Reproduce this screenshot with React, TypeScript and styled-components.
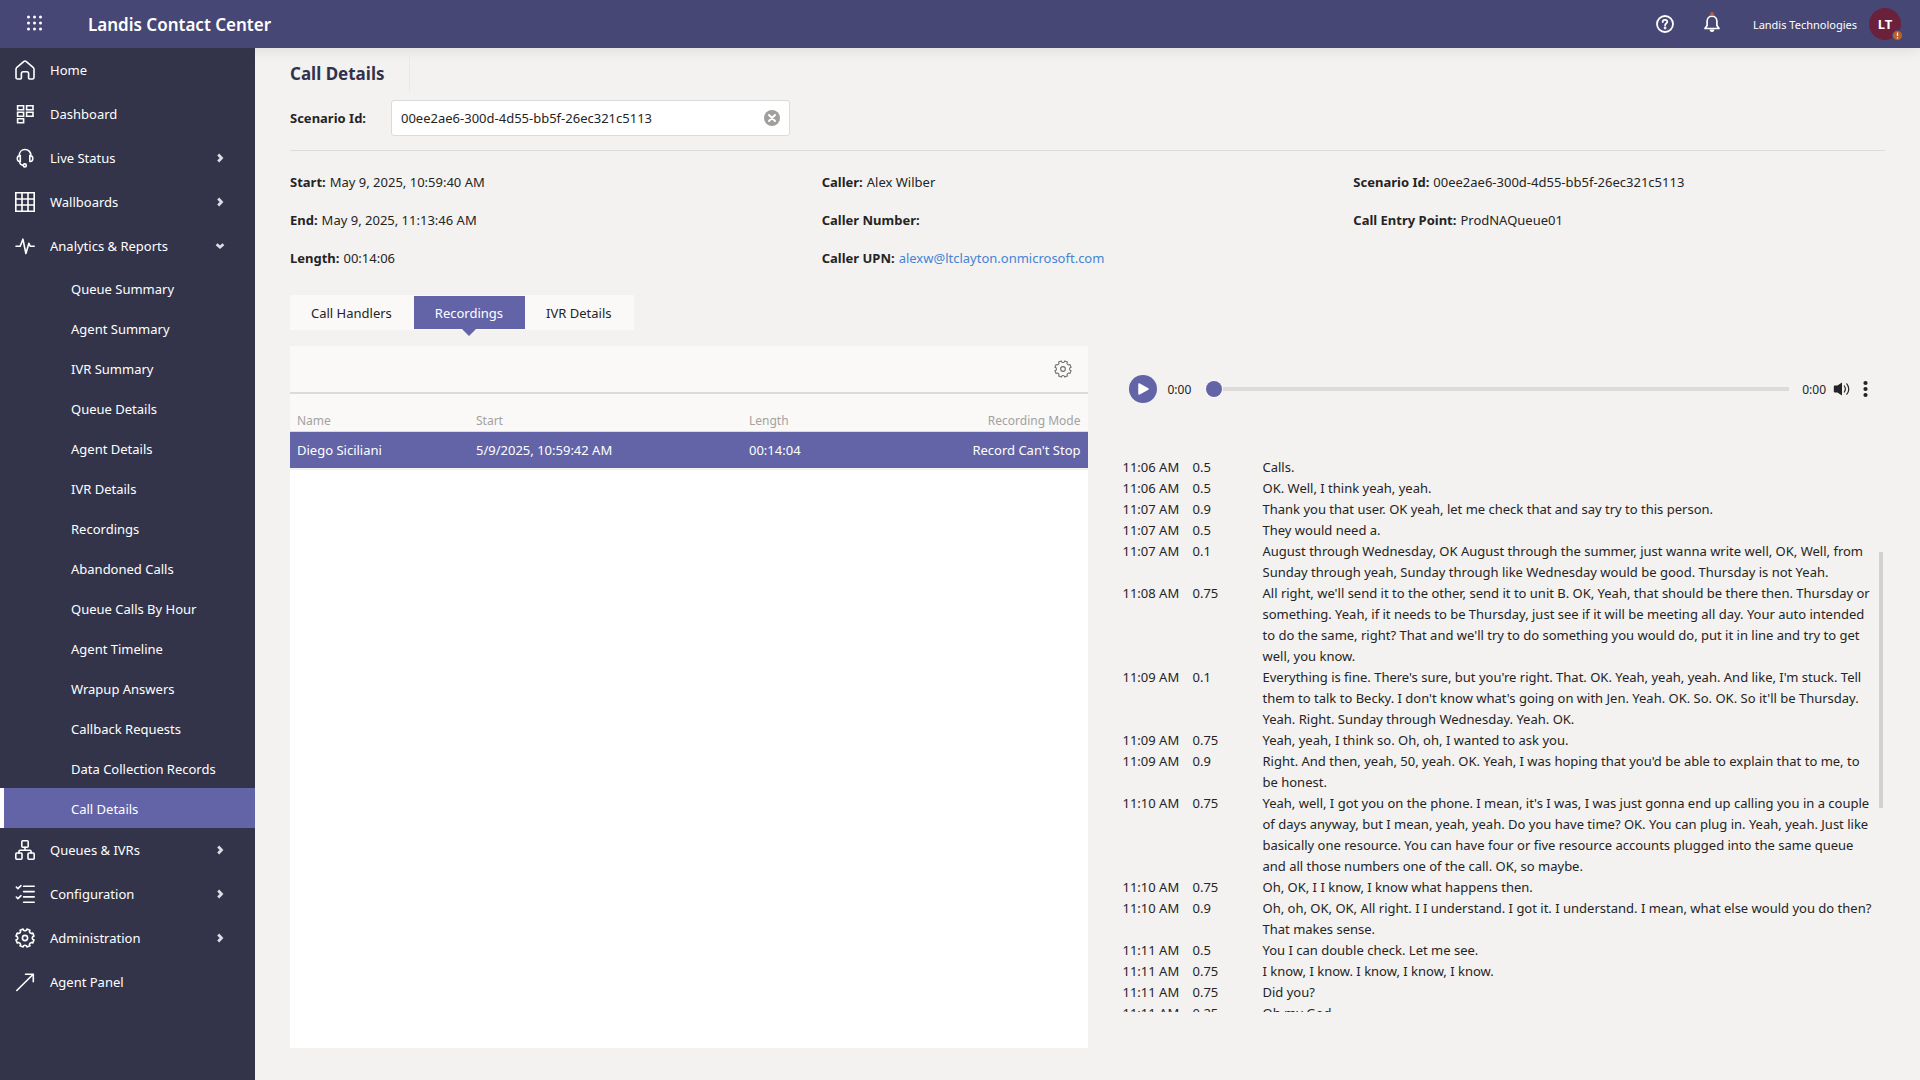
import React from "react";
import styled, { createGlobalStyle, css } from "styled-components";

const color = {
  header: "#464775",
  sidebar: "#33344a",
  brand: "#6264a7",
  page: "#f3f2f1",
  surface: "#faf9f8",
  border: "#dcdbda",
  text: "#252424",
  muted: "#a3a2a0",
  link: "#4583d3",
};

const GlobalStyle = createGlobalStyle`
  *, *::before, *::after { box-sizing: border-box; }
  body {
    margin: 0;
    background: ${color.page};
    color: ${color.text};
    font: 13px/21px "Noto Sans", "Open Sans", sans-serif;
  }
  button, input { font: inherit; color: inherit; }
  button { background: none; border: 0; padding: 0; cursor: pointer; }
  a { color: inherit; text-decoration: none; }
  svg { display: block; flex: none; }
`;

/* ---------- shell ---------- */

const Shell = styled.div`
  display: grid;
  grid-template: 48px minmax(0, 1fr) / 255px minmax(0, 1fr);
  height: 100vh;
`;

const TopBar = styled.header`
  grid-column: 1 / -1;
  display: flex;
  align-items: center;
  padding: 0 19px 0 26px;
  background: ${color.header};
  color: #fff;
  box-shadow: 0 2px 14px rgba(0, 0, 0, 0.09);
`;

const Brand = styled.div`
  margin-left: 44px;
  font-size: 17px;
  font-weight: 600;
`;

const TopActions = styled.div`
  display: flex;
  align-items: center;
  gap: 28px;
  margin-left: auto;
`;

const Account = styled.button`
  display: flex;
  align-items: center;
  gap: 12px;
  margin-left: 4px;
  font-size: 11px;
`;

const Avatar = styled.span`
  position: relative;
  display: grid;
  place-items: center;
  width: 32px;
  height: 32px;
  border-radius: 50%;
  background: #6b213c;
  font-size: 13px;
  font-weight: 700;
`;

const AvatarBadge = styled.svg`
  position: absolute;
  right: -2px;
  bottom: -1px;
`;

/* ---------- sidebar ---------- */

const Sidebar = styled.nav`
  position: relative;
  overflow: hidden;
  background: ${color.sidebar};
  color: #fff;
`;

const NavList = styled.ul`
  list-style: none;
  margin: 0;
  padding: 0;
`;

const NavLink = styled.a`
  display: flex;
  align-items: center;
  gap: 15px;
  height: 44px;
  padding: 0 30px 0 15px;
`;

const NavText = styled.span`
  flex: 1;
`;

const SubLink = styled.a<{ $active?: boolean }>`
  display: flex;
  align-items: center;
  height: 40px;
  padding: 2px 0 0 67px;
  border-left: 4px solid transparent;
  ${(p) =>
    p.$active &&
    css`
      background: ${color.brand};
      border-left-color: #fff;
    `}
`;

/* ---------- main ---------- */

const Main = styled.main`
  display: flex;
  flex-direction: column;
  min-width: 0;
  padding: 8px 35px 32px;
`;

const TitleRow = styled.div`
  display: flex;
`;

const Title = styled.h1`
  margin: 0;
  padding-right: 24px;
  border-right: 1px solid #e9e8e7;
  color: #32334a;
  font-size: 17px;
  line-height: 36px;
  font-weight: 700;
`;

const SearchRow = styled.div`
  display: flex;
  align-items: center;
  margin-top: 8px;
  padding-bottom: 14px;
  border-bottom: 1px solid ${color.border};
`;

const SearchLabel = styled.label`
  width: 101px;
  font-weight: 700;
`;

const SearchBox = styled.div`
  display: flex;
  align-items: center;
  width: 399px;
  height: 36px;
  padding-right: 9px;
  border: 1px solid ${color.border};
  border-radius: 3px;
  background: #fff;
`;

const SearchInput = styled.input`
  flex: 1;
  min-width: 0;
  padding: 0 9px;
  border: 0;
  outline: 0;
  background: none;
`;

const Facts = styled.dl`
  display: grid;
  grid-template-columns: repeat(3, 1fr);
  margin: 12px 0 0;
`;

const Fact = styled.div`
  display: flex;
  align-items: center;
  gap: 4px;
  height: 38px;

  dt {
    font-weight: 700;
  }
  dd {
    margin: 0;
  }
`;

const MailLink = styled.a`
  color: ${color.link};
`;

const Tabs = styled.div`
  display: flex;
  align-self: flex-start;
  margin-top: 18px;
  padding: 1px 0;
  background: ${color.surface};
`;

const Tab = styled.button<{ $active?: boolean }>`
  position: relative;
  height: 33px;
  padding: 1px 22px 0 21px;
  ${(p) =>
    p.$active &&
    css`
      background: ${color.brand};
      color: #fff;
      &::after {
        content: "";
        position: absolute;
        top: 100%;
        left: 50%;
        margin-left: -7px;
        border: 7px solid transparent;
        border-bottom-width: 0;
        border-top-color: ${color.brand};
      }
    `}
`;

const Columns = styled.div`
  flex: 1;
  display: grid;
  grid-template-columns: repeat(2, minmax(0, 1fr));
  min-height: 0;
  margin-top: 16px;
`;

/* ---------- recordings ---------- */

const Panel = styled.section`
  background: #fff;
`;

const PanelTools = styled.div`
  display: flex;
  align-items: center;
  justify-content: flex-end;
  height: 48px;
  padding: 0 16px 0 0;
  border-bottom: 2px solid ${color.border};
  background: ${color.surface};
`;

const RecordingTable = styled.table`
  width: 100%;
  table-layout: fixed;
  border-collapse: separate;
  border-spacing: 0;
  text-align: left;

  th,
  td {
    padding: 0 7px;
  }
  th {
    height: 37px;
    padding-top: 16px;
    border-bottom: 1px solid ${color.border};
    background: ${color.surface};
    color: ${color.muted};
    font-size: 12px;
    font-weight: 400;
  }
  td {
    height: 38px;
    border-bottom: 2px solid ${color.page};
    background: ${color.brand};
    color: #fff;
  }
  th:last-child,
  td:last-child {
    text-align: right;
  }
`;

const Col = styled.col<{ $w?: number }>`
  width: ${(p) => (p.$w ? `${p.$w}px` : "auto")};
`;

/* ---------- player and transcript ---------- */

const Playback = styled.section`
  display: flex;
  flex-direction: column;
  min-height: 0;
  padding: 0 2px 36px 35px;
`;

const Player = styled.div`
  display: flex;
  align-items: center;
  height: 86px;
  padding: 0 15px 0 6px;
  font-size: 12px;
`;

const PlayButton = styled.button`
  display: grid;
  place-items: center;
  width: 28px;
  height: 28px;
  margin-right: 11px;
  border-radius: 50%;
  background: ${color.brand};
`;

const Seek = styled.input`
  appearance: none;
  flex: 1;
  min-width: 0;
  height: 16px;
  margin: 0 13px 0 15px;
  background: linear-gradient(${color.border}, ${color.border}) center / 100% 4px no-repeat;

  &::-webkit-slider-thumb {
    appearance: none;
    width: 16px;
    height: 16px;
    border-radius: 50%;
    background: ${color.brand};
    box-shadow: 0 0 0 1px ${color.surface};
  }
`;

const PlayerIcons = styled.div`
  display: flex;
  align-items: center;
  gap: 12px;
  margin-left: 7px;
`;

const TranscriptFrame = styled.div`
  position: relative;
  flex: 1;
  min-height: 0;
  margin-top: 25px;
  overflow: hidden;
`;

const ScrollThumb = styled.div`
  position: absolute;
  top: 95px;
  right: 0;
  width: 4px;
  height: 256px;
  background: #d2d1d0;
`;

const Transcript = styled.table`
  width: 100%;
  table-layout: fixed;
  border-collapse: collapse;

  td {
    padding: 0;
    vertical-align: top;
  }
  td:last-child {
    padding-right: 8px;
  }
`;

/* ---------- icons ---------- */

const Glyph = ({ children }: { children: React.ReactNode }) => (
  <svg width="20" height="20" viewBox="0 0 20 20" fill="none" stroke="currentColor" strokeWidth="1.6" strokeLinecap="round" strokeLinejoin="round" aria-hidden="true">
    {children}
  </svg>
);

const gearPath =
  "M8.1 1 L8.7 2.3 Q10 3.2 11.3 2.3 L11.9 1 L14.9 2.2 L14.4 3.7 Q14.8 5.2 16.3 5.6 L17.8 5.1 L19 8.1 L17.7 8.7 Q16.8 10 17.7 11.3 L19 11.9 L17.8 14.9 L16.3 14.4 Q14.8 14.8 14.4 16.3 L14.9 17.8 L11.9 19 L11.3 17.7 Q10 16.8 8.7 17.7 L8.1 19 L5.1 17.8 L5.6 16.3 Q5.2 14.8 3.7 14.4 L2.2 14.9 L1 11.9 L2.3 11.3 Q3.2 10 2.3 8.7 L1 8.1 L2.2 5.1 L3.7 5.6 Q5.2 5.2 5.6 3.7 L5.1 2.2 Z";

const icons = {
  home: (
    <Glyph>
      <path d="M2.6 19c-1 0-1.6-.7-1.6-1.6V9.1c0-.6.2-1 .6-1.4L9 1.4c.6-.5 1.4-.5 2 0l7.4 6.3c.4.4.6.8.6 1.4v8.3c0 .9-.6 1.6-1.6 1.6h-2.8c-.6 0-1-.4-1-1v-4.6c0-1-.7-1.7-1.7-1.7H8.1c-1 0-1.7.7-1.7 1.7V18c0 .6-.4 1-1 1z" />
    </Glyph>
  ),
  dashboard: (
    <Glyph>
      <path d="M2.6 1.7h6v4h-6zM11.6 1.7H18v4h-6.4zM2.6 8.200h6v4h-6zM11.6 8.2H18v4h-6.4zM2.6 14.7h6v4h-6z" strokeLinejoin="miter" />
    </Glyph>
  ),
  headset: (
    <Glyph>
      <path d="M4.2 7.5C4.2 4 6.7 1.5 10 1.500s5.9 2.5 5.9 6M5.300 7.600v5.800c-2.300.3-3-1.100-3-2.900s.8-3 3-2.900zM14.800 7.600v5.800c2.300.3 3-1.100 3-2.900s-.8-3-3-2.900zM4.600 13.500c.2 2.400 1.400 3.700 3.800 3.700" />
      <circle cx="9.8" cy="17.4" r="1.5" />
    </Glyph>
  ),
  grid: (
    <Glyph>
      <path d="M.8.8h18.4v18.4H.8zM7 .8v18.4M13 .8v18.4M.8 7h18.4M.8 13h18.4" strokeLinejoin="miter" />
    </Glyph>
  ),
  pulse: (
    <Glyph>
      <path d="M1 10.3h4.2L7.9 3.2l3 14.3 3-10.2 1.3 3h4" />
    </Glyph>
  ),
  queues: (
    <Glyph>
      <rect x="6.8" y=".8" width="6.4" height="6.4" rx="1" />
      <rect x=".8" y="13" width="6.2" height="6.2" rx="1" />
      <rect x="13" y="13" width="6.2" height="6.2" rx="1" />
      <path d="M10 7.200v3M3.900 13v-1.600c0-.8.4-1.200 1.200-1.200h9.800c.8 0 1.200.4 1.200 1.200V13" />
    </Glyph>
  ),
  checklist: (
    <Glyph>
      <path d="M1.3 3l1.600 1.600L6 1.700M1.3 13l1.600 1.600L6 11.700M8.600 2.300h10.600M8.600 7.600h10.600M8.600 12.900h10.600M8.600 18.200h10.600" />
    </Glyph>
  ),
  gear: (
    <Glyph>
      <path d={gearPath} />
      <circle cx="10" cy="10" r="2.6" />
    </Glyph>
  ),
  arrow: (
    <Glyph>
      <path d="M1.8 18.500L18.200 2.200M10.500 2.200h7.800v7.600" />
    </Glyph>
  ),
};

const Chevron = ({ down }: { down?: boolean }) => (
  <svg width="10" height="10" viewBox="0 0 10 10" fill="none" stroke="#dcdce6" strokeWidth="2.8" aria-hidden="true">
    <path d={down ? "M1.600 3.200L5 6.200 8.400 3.200" : "M3.200 1.600L6.500 5 3.200 8.400"} />
  </svg>
);

/* ---------- data ---------- */

const navTop: { label: string; icon: React.ReactNode; chevron?: "right" | "down" }[] = [
  { label: "Home", icon: icons.home },
  { label: "Dashboard", icon: icons.dashboard },
  { label: "Live Status", icon: icons.headset, chevron: "right" },
  { label: "Wallboards", icon: icons.grid, chevron: "right" },
  { label: "Analytics & Reports", icon: icons.pulse, chevron: "down" },
];

const reports = [
  "Queue Summary",
  "Agent Summary",
  "IVR Summary",
  "Queue Details",
  "Agent Details",
  "IVR Details",
  "Recordings",
  "Abandoned Calls",
  "Queue Calls By Hour",
  "Agent Timeline",
  "Wrapup Answers",
  "Callback Requests",
  "Data Collection Records",
  "Call Details",
];

const navBottom: typeof navTop = [
  { label: "Queues & IVRs", icon: icons.queues, chevron: "right" },
  { label: "Configuration", icon: icons.checklist, chevron: "right" },
  { label: "Administration", icon: icons.gear, chevron: "right" },
  { label: "Agent Panel", icon: icons.arrow },
];

const scenarioId = "00ee2ae6-300d-4d55-bb5f-26ec321c5113";

const facts: [string, React.ReactNode][] = [
  ["Start:", "May 9, 2025, 10:59:40 AM"],
  ["Caller:", "Alex Wilber"],
  ["Scenario Id:", scenarioId],
  ["End:", "May 9, 2025, 11:13:46 AM"],
  ["Caller Number:", ""],
  ["Call Entry Point:", "ProdNAQueue01"],
  ["Length:", "00:14:06"],
  ["Caller UPN:", <MailLink href="mailto:alexw@ltclayton.onmicrosoft.com">alexw@ltclayton.onmicrosoft.com</MailLink>],
];

const transcript: [string, string, string][] = [
  ["11:06 AM", "0.5", "Calls."],
  ["11:06 AM", "0.5", "OK. Well, I think yeah, yeah."],
  ["11:07 AM", "0.9", "Thank you that user. OK yeah, let me check that and say try to this person."],
  ["11:07 AM", "0.5", "They would need a."],
  ["11:07 AM", "0.1", "August through Wednesday, OK August through the summer, just wanna write well, OK, Well, from Sunday through yeah, Sunday through like Wednesday would be good. Thursday is not Yeah."],
  ["11:08 AM", "0.75", "All right, we'll send it to the other, send it to unit B. OK, Yeah, that should be there then. Thursday or something. Yeah, if it needs to be Thursday, just see if it will be meeting all day. Your auto intended to do the same, right? That and we'll try to do something you would do, put it in line and try to get well, you know."],
  ["11:09 AM", "0.1", "Everything is fine. There's sure, but you're right. That. OK. Yeah, yeah, yeah. And like, I'm stuck. Tell them to talk to Becky. I don't know what's going on with Jen. Yeah. OK. So. OK. So it'll be Thursday. Yeah. Right. Sunday through Wednesday. Yeah. OK."],
  ["11:09 AM", "0.75", "Yeah, yeah, I think so. Oh, oh, I wanted to ask you."],
  ["11:09 AM", "0.9", "Right. And then, yeah, 50, yeah. OK. Yeah, I was hoping that you'd be able to explain that to me, to be honest."],
  ["11:10 AM", "0.75", "Yeah, well, I got you on the phone. I mean, it's I was, I was just gonna end up calling you in a couple of days anyway, but I mean, yeah, yeah. Do you have time? OK. You can plug in. Yeah, yeah. Just like basically one resource. You can have four or five resource accounts plugged into the same queue and all those numbers one of the call. OK, so maybe."],
  ["11:10 AM", "0.75", "Oh, OK, I I know, I know what happens then."],
  ["11:10 AM", "0.9", "Oh, oh, OK, OK, All right. I I understand. I got it. I understand. I mean, what else would you do then? That makes sense."],
  ["11:11 AM", "0.5", "You I can double check. Let me see."],
  ["11:11 AM", "0.75", "I know, I know. I know, I know, I know."],
  ["11:11 AM", "0.75", "Did you?"],
  ["11:11 AM", "0.25", "Oh my God."],
];

/* ---------- components ---------- */

const NavItems = ({ items }: { items: typeof navTop }) => (
  <>
    {items.map((item) => (
      <li key={item.label}>
        <NavLink href="#">
          {item.icon}
          <NavText>{item.label}</NavText>
          {item.chevron && <Chevron down={item.chevron === "down"} />}
        </NavLink>
        {item.chevron === "down" && (
          <NavList>
            {reports.map((name) => (
              <li key={name}>
                <SubLink href="#" $active={name === "Call Details"}>
                  {name}
                </SubLink>
              </li>
            ))}
          </NavList>
        )}
      </li>
    ))}
  </>
);

export default function App() {
  return (
    <>
      <GlobalStyle />
      <Shell>
        <TopBar>
          <button aria-label="Apps">
            <svg width="18" height="18" viewBox="0 0 18 18" fill="#fff">
              {[2, 8, 14].map((y) => [2.5, 8.5, 14.5].map((x) => <circle key={`${x}-${y}`} cx={x} cy={y} r="1.5" />))}
            </svg>
          </button>
          <Brand>Landis Contact Center</Brand>
          <TopActions>
            <button aria-label="Help">
              <svg width="20" height="20" viewBox="0 0 20 20" fill="none" stroke="#fff" strokeWidth="1.8" strokeLinecap="round">
                <circle cx="10" cy="10" r="8" />
                <path d="M7.7 8c0-1.400 1-2.200 2.300-2.200s2.300.8 2.300 2c0 1.700-2.200 1.800-2.200 3.500" />
                <circle cx="10.1" cy="14" r=".5" />
              </svg>
            </button>
            <button aria-label="Notifications">
              <svg width="18" height="24" viewBox="0 0 18 24" fill="none" stroke="#fff" strokeWidth="1.7" strokeLinejoin="round">
                <path d="M9 4.200c-3.100 0-4.900 2.300-4.900 5.200v4l-2.100 3.100h14l-2.100-3.100v-4c0-2.900-1.800-5.200-4.900-5.200z" />
                <path d="M6.500 17.500h5c-.2 1.700-1.200 2.500-2.500 2.500s-2.300-.8-2.500-2.500z" fill="#fff" stroke="none" />
                <circle cx="9" cy="1.900" r="1.900" fill="#b5603f" stroke="none" />
              </svg>
            </button>
            <Account>
              Landis Technologies
              <Avatar>
                LT
                <AvatarBadge width="11" height="11" viewBox="0 0 11 11" aria-hidden="true">
                  <circle cx="5.5" cy="5.5" r="5" fill="#b8622f" stroke="#464775" />
                  <path d="M5.500 2.500v3.600M5.500 7.300v1.300" stroke="#fff" strokeWidth="1.2" />
                </AvatarBadge>
              </Avatar>
            </Account>
          </TopActions>
        </TopBar>

        <Sidebar aria-label="Main">
          <NavList>
            <NavItems items={navTop} />
            <NavItems items={navBottom} />
          </NavList>
        </Sidebar>

        <Main>
          <TitleRow>
            <Title>Call Details</Title>
          </TitleRow>
          <SearchRow>
            <SearchLabel htmlFor="scenario">Scenario Id:</SearchLabel>
            <SearchBox>
              <SearchInput id="scenario" type="text" defaultValue={scenarioId} />
              <button aria-label="Clear">
                <svg width="16" height="16" viewBox="0 0 16 16">
                  <circle cx="8" cy="8" r="8" fill="#a19f9d" />
                  <path d="M5 5l6 6M11 5l-6 6" stroke="#fff" strokeWidth="2" strokeLinecap="round" />
                </svg>
              </button>
            </SearchBox>
          </SearchRow>

          <Facts>
            {facts.map(([label, value]) => (
              <Fact key={label}>
                <dt>{label}</dt>
                <dd>{value}</dd>
              </Fact>
            ))}
          </Facts>

          <Tabs role="tablist">
            <Tab role="tab">Call Handlers</Tab>
            <Tab role="tab" $active aria-selected="true">
              Recordings
            </Tab>
            <Tab role="tab">IVR Details</Tab>
          </Tabs>

          <Columns>
            <Panel>
              <PanelTools>
                <button aria-label="Table settings">
                  <svg width="18" height="18" viewBox="0 0 20 20" fill="none" stroke="#6f6d6b" strokeWidth="1.2" strokeLinejoin="round">
                    <path d={gearPath} />
                    <circle cx="10" cy="10" r="2.6" />
                  </svg>
                </button>
              </PanelTools>
              <RecordingTable>
                <colgroup>
                  <Col $w={179} />
                  <Col $w={273} />
                  <Col />
                  <Col />
                </colgroup>
                <thead>
                  <tr>
                    <th>Name</th>
                    <th>Start</th>
                    <th>Length</th>
                    <th>Recording Mode</th>
                  </tr>
                </thead>
                <tbody>
                  <tr>
                    <td>Diego Siciliani</td>
                    <td>5/9/2025, 10:59:42 AM</td>
                    <td>00:14:04</td>
                    <td>Record Can't Stop</td>
                  </tr>
                </tbody>
              </RecordingTable>
            </Panel>

            <Playback>
              <Player>
                <PlayButton aria-label="Play">
                  <svg width="14" height="14" viewBox="0 0 14 14" fill="#fff" stroke="#fff" strokeWidth="1.5" strokeLinejoin="round">
                    <path d="M3 2l9 5-9 5z" />
                  </svg>
                </PlayButton>
                <span>0:00</span>
                <Seek type="range" min="0" max="100" defaultValue="0" aria-label="Seek" />
                <span>0:00</span>
                <PlayerIcons>
                  <button aria-label="Volume">
                    <svg width="18" height="16" viewBox="0 0 18 16" fill="none" stroke={color.text} strokeLinecap="round">
                      <path d="M.8 5.400c0-.5.400-.8.800-.8h2.800L9 1.500v13l-4.600-3.100H1.600c-.5 0-.8-.4-.8-.8z" fill={color.text} stroke="none" />
                      <path d="M11.300 5c1.300 1.800 1.300 4.200 0 6M13.800 2.800c2.600 3 2.600 7.400 0 10.400" strokeWidth="1.2" />
                    </svg>
                  </button>
                  <button aria-label="More options">
                    <svg width="5" height="18" viewBox="0 0 5 18" fill={color.text}>
                      <circle cx="2.5" cy="3" r="2.1" />
                      <circle cx="2.5" cy="9" r="2.1" />
                      <circle cx="2.5" cy="15" r="2.1" />
                    </svg>
                  </button>
                </PlayerIcons>
              </Player>

              <TranscriptFrame>
                <Transcript>
                  <colgroup>
                    <Col $w={70} />
                    <Col $w={70} />
                    <Col />
                  </colgroup>
                  <tbody>
                    {transcript.map(([time, score, line], i) => (
                      <tr key={i}>
                        <td>{time}</td>
                        <td>{score}</td>
                        <td>{line}</td>
                      </tr>
                    ))}
                  </tbody>
                </Transcript>
                <ScrollThumb />
              </TranscriptFrame>
            </Playback>
          </Columns>
        </Main>
      </Shell>
    </>
  );
}
